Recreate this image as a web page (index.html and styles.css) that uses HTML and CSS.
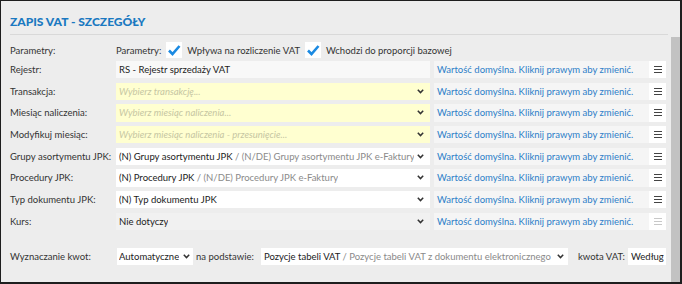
FILE: index.html
```html
<!DOCTYPE html>
<html lang="pl">
<head>
    <meta charset="UTF-8">
    <title>Zapis VAT - szczegóły</title>
    <link rel="stylesheet" href="styles.css">
</head>
<body>

<div class="window">
    <div class="main">
        <h1 class="title">ZAPIS VAT - SZCZEGÓŁY</h1>

        <div class="params-row">
            <span class="label">Parametry:</span>
            <div class="params">
                <span>Parametry:</span>
                <span class="check"><svg width="16" height="16" viewBox="0 0 16 16"><polyline points="3,8.5 6.5,12 13.5,4" fill="none" stroke="#1b8ae2" stroke-width="2.6"/></svg></span>
                <span>Wpływa na rozliczenie VAT</span>
                <span class="check"><svg width="16" height="16" viewBox="0 0 16 16"><polyline points="3,8.5 6.5,12 13.5,4" fill="none" stroke="#1b8ae2" stroke-width="2.6"/></svg></span>
                <span>Wchodzi do proporcji bazowej</span>
            </div>
        </div>

        <div class="form">
            <span class="label">Rejestr:</span>
            <div class="field readonly">RS - Rejestr sprzedaży VAT</div>
            <div class="default"><span class="default-text">Wartość domyślna. Kliknij prawym aby zmienić.</span><span class="menu"><svg width="8" height="7" viewBox="0 0 8 7"><path d="M0 0.5H8M0 3.5H8M0 6.5H8" stroke="#444" stroke-width="1.1"/></svg></span></div>

            <span class="label">Transakcja:</span>
            <div class="field required"><span class="placeholder">Wybierz transakcję...</span><span class="chevron"><svg width="7" height="5" viewBox="0 0 7 5"><polyline points="0.8,0.8 3.5,3.6 6.2,0.8" fill="none" stroke="#333" stroke-width="1.5"/></svg></span></div>
            <div class="default"><span class="default-text">Wartość domyślna. Kliknij prawym aby zmienić.</span><span class="menu"><svg width="8" height="7" viewBox="0 0 8 7"><path d="M0 0.5H8M0 3.5H8M0 6.5H8" stroke="#444" stroke-width="1.1"/></svg></span></div>

            <span class="label">Miesiąc naliczenia:</span>
            <div class="field required"><span class="placeholder">Wybierz miesiąc naliczenia...</span><span class="chevron"><svg width="7" height="5" viewBox="0 0 7 5"><polyline points="0.8,0.8 3.5,3.6 6.2,0.8" fill="none" stroke="#333" stroke-width="1.5"/></svg></span></div>
            <div class="default"><span class="default-text">Wartość domyślna. Kliknij prawym aby zmienić.</span><span class="menu"><svg width="8" height="7" viewBox="0 0 8 7"><path d="M0 0.5H8M0 3.5H8M0 6.5H8" stroke="#444" stroke-width="1.1"/></svg></span></div>

            <span class="label">Modyfikuj miesiąc:</span>
            <div class="field required"><span class="placeholder">Wybierz miesiąc naliczenia - przesunięcie...</span><span class="chevron"><svg width="7" height="5" viewBox="0 0 7 5"><polyline points="0.8,0.8 3.5,3.6 6.2,0.8" fill="none" stroke="#333" stroke-width="1.5"/></svg></span></div>
            <div class="default"><span class="default-text">Wartość domyślna. Kliknij prawym aby zmienić.</span><span class="menu"><svg width="8" height="7" viewBox="0 0 8 7"><path d="M0 0.5H8M0 3.5H8M0 6.5H8" stroke="#444" stroke-width="1.1"/></svg></span></div>

            <span class="label">Grupy asortymentu JPK:</span>
            <div class="field"><span class="value">(N) Grupy asortymentu JPK <span class="muted">/ (N/DE) Grupy asortymentu JPK e-Faktury</span></span><span class="chevron"><svg width="7" height="5" viewBox="0 0 7 5"><polyline points="0.8,0.8 3.5,3.6 6.2,0.8" fill="none" stroke="#333" stroke-width="1.5"/></svg></span></div>
            <div class="default"><span class="default-text">Wartość domyślna. Kliknij prawym aby zmienić.</span><span class="menu"><svg width="8" height="7" viewBox="0 0 8 7"><path d="M0 0.5H8M0 3.5H8M0 6.5H8" stroke="#444" stroke-width="1.1"/></svg></span></div>

            <span class="label">Procedury JPK:</span>
            <div class="field"><span class="value">(N) Procedury JPK <span class="muted">/ (N/DE) Procedury JPK e-Faktury</span></span><span class="chevron"><svg width="7" height="5" viewBox="0 0 7 5"><polyline points="0.8,0.8 3.5,3.6 6.2,0.8" fill="none" stroke="#333" stroke-width="1.5"/></svg></span></div>
            <div class="default"><span class="default-text">Wartość domyślna. Kliknij prawym aby zmienić.</span><span class="menu"><svg width="8" height="7" viewBox="0 0 8 7"><path d="M0 0.5H8M0 3.5H8M0 6.5H8" stroke="#444" stroke-width="1.1"/></svg></span></div>

            <span class="label">Typ dokumentu JPK:</span>
            <div class="field"><span class="value">(N) Typ dokumentu JPK</span><span class="chevron"><svg width="7" height="5" viewBox="0 0 7 5"><polyline points="0.8,0.8 3.5,3.6 6.2,0.8" fill="none" stroke="#333" stroke-width="1.5"/></svg></span></div>
            <div class="default"><span class="default-text">Wartość domyślna. Kliknij prawym aby zmienić.</span><span class="menu"><svg width="8" height="7" viewBox="0 0 8 7"><path d="M0 0.5H8M0 3.5H8M0 6.5H8" stroke="#444" stroke-width="1.1"/></svg></span></div>

            <span class="label">Kurs:</span>
            <div class="field disabled"><span class="value">Nie dotyczy</span><span class="chevron"><svg width="7" height="5" viewBox="0 0 7 5"><polyline points="0.8,0.8 3.5,3.6 6.2,0.8" fill="none" stroke="#333" stroke-width="1.5"/></svg></span></div>
            <div class="default"><span class="default-text">Wartość domyślna. Kliknij prawym aby zmienić.</span><span class="menu"><svg width="8" height="7" viewBox="0 0 8 7"><path d="M0 0.5H8M0 3.5H8M0 6.5H8" stroke="#c8c8c8" stroke-width="1.1"/></svg></span></div>
        </div>

        <div class="amounts">
            <span class="label">Wyznaczanie kwot:</span>
            <div class="select select-mode"><span class="value">Automatyczne</span><span class="chevron"><svg width="7" height="5" viewBox="0 0 7 5"><polyline points="0.8,0.8 3.5,3.6 6.2,0.8" fill="none" stroke="#333" stroke-width="1.5"/></svg></span></div>
            <span class="inline-label basis-label">na podstawie:</span>
            <div class="select select-source"><span class="value">Pozycje tabeli VAT <span class="muted">/ Pozycje tabeli VAT z dokumentu elektronicznego</span></span><span class="chevron"><svg width="7" height="5" viewBox="0 0 7 5"><polyline points="0.8,0.8 3.5,3.6 6.2,0.8" fill="none" stroke="#333" stroke-width="1.5"/></svg></span></div>
            <span class="inline-label vat-label">kwota VAT:</span>
            <div class="select select-vat"><span class="value">Według</span></div>
        </div>
    </div>
    <div class="scrollbar"><div class="thumb"></div></div>
</div>

</body>
</html>
```

FILE: styles.css
```css
body {
    margin: 0;
    font-family: 'Lato', 'Open Sans', sans-serif;
    font-size: 9.5px;
    color: #333;
}
.window {
    display: flex;
    height: 281px;
    background: #ededed;
    border-top: 1px solid #1e1e1e;
    border-left: 1px solid #1e1e1e;
    border-right: 2px solid #1e1e1e;
    border-bottom: 2px solid #1e1e1e;
}
.main {
    flex: 1;
    padding: 0 3px 0 9px;
    overflow: hidden;
}
.title {
    margin: 0;
    padding: 12px 0 4px;
    font-size: 12px;
    line-height: 17px;
    font-weight: 900;
    color: #1b79c1;
    border-bottom: 1px solid #d9d9d9;
}
.label {
    display: flex;
    align-items: center;
    color: #333;
    white-space: nowrap;
}
.params-row {
    display: flex;
    height: 18px;
    margin: 6px 0 2px;
}
.params-row .label {
    width: 106px;
}
.params {
    display: flex;
    align-items: center;
    gap: 5px;
}
.check {
    display: flex;
    width: 16px;
    height: 16px;
    background: #fff;
}
.form {
    display: grid;
    grid-template-columns: 106px 314px 236px;
    grid-auto-rows: 17.33px;
    row-gap: 4.34px;
}
.field {
    display: flex;
    align-items: center;
    justify-content: space-between;
    padding: 0 6px 0 3px;
    background: #fff;
    color: #222;
    white-space: nowrap;
    overflow: hidden;
}
.field.readonly {
    background: #f8f8f8;
}
.field.required {
    background: #ffffd0;
}
.field.disabled {
    background: #f1f1f1;
}
.placeholder {
    font-style: italic;
    color: #c6c6a2;
}
.value {
    overflow: hidden;
}
.muted {
    color: #8a8a8a;
}
.chevron {
    display: flex;
    flex-shrink: 0;
    margin-left: 3px;
}
.default {
    display: flex;
    margin-left: 4px;
    background: #f5f5f5;
}
.default-text {
    flex: 1;
    display: flex;
    align-items: center;
    padding-left: 3px;
    color: #2c7ec8;
    white-space: nowrap;
}
.menu {
    display: flex;
    align-items: center;
    justify-content: center;
    width: 17px;
    background: #fff;
}
.amounts {
    display: flex;
    align-items: center;
    height: 17px;
    margin-top: 18px;
}
.amounts .label {
    width: 107px;
}
.select {
    display: flex;
    align-items: center;
    justify-content: space-between;
    height: 17px;
    padding: 0 4px 0 3px;
    background: #fff;
    color: #222;
    white-space: nowrap;
    overflow: hidden;
    box-sizing: border-box;
}
.select-mode {
    width: 76px;
    padding: 0 3px 0 2px;
}
.select-mode .value {
    flex-shrink: 0;
}
.select-mode .chevron {
    margin-left: 2px;
}
.select-source {
    width: 307px;
}
.select-vat {
    width: 38px;
    padding-right: 0;
}
.inline-label {
    white-space: nowrap;
}
.basis-label {
    width: 65px;
    margin-left: 3px;
}
.vat-label {
    width: 50px;
    margin-left: 10px;
}
.scrollbar {
    width: 9px;
    padding-top: 36px;
}
.thumb {
    height: 100%;
    background: #c2c2c2;
}
```
